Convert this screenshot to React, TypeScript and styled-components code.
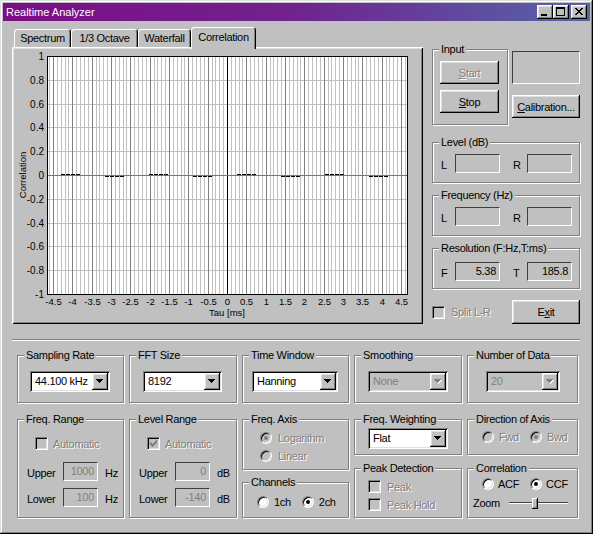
import styled, { createGlobalStyle } from "styled-components";

const GlobalStyle = createGlobalStyle`
  * { box-sizing: border-box; }
  html, body { margin: 0; padding: 0; background: #c0c0c0; }
  body {
    font-family: "Liberation Sans", Arial, sans-serif;
    font-size: 11px;
    color: #000;
  }
`;

const raised = `
  box-shadow: inset -1px -1px #000, inset 1px 1px #fff, inset -2px -2px #808080, inset 2px 2px #dfdfdf;
`;
const sunken = `
  box-shadow: inset 1px 1px #808080, inset -1px -1px #fff, inset 2px 2px #000, inset -2px -2px #dfdfdf;
`;

// ---------- window frame ----------

const Window = styled.div`
  width: 593px;
  height: 534px;
  padding: 3px;
  background: #c0c0c0;
  box-shadow: inset -1px -1px #000, inset 1px 1px #dfdfdf, inset -2px -2px #808080, inset 2px 2px #fff;
  letter-spacing: -0.3px;
`;

const TitleBar = styled.div`
  height: 18px;
  display: flex;
  align-items: center;
  padding: 0 3px;
  background: linear-gradient(90deg, #7d0c87 0%, #70238f 50%, #5566aa 100%);
  color: #fff;
  letter-spacing: 0;
`;

const TitleText = styled.span`
  flex: 1;
  font-size: 11px;
`;

const TitleButton = styled.span<{ $gap?: number }>`
  display: block;
  width: 16px;
  height: 14px;
  margin-left: ${(p) => p.$gap ?? 0}px;
  background: #c0c0c0;
  ${raised}
  svg { display: block; }
`;

const Main = styled.div`
  padding: 6px 10px 0 9px;
`;

const TopArea = styled.div`
  display: flex;
  align-items: flex-start;
  gap: 9px;
`;

// ---------- tabs ----------

const TabArea = styled.div`
  width: 411px;
`;

const TabStrip = styled.div`
  height: 20px;
  display: flex;
  align-items: flex-end;
  padding-left: 2px;
`;

const Tab = styled.div<{ $w: number; $active?: boolean }>`
  position: relative;
  z-index: ${(p) => (p.$active ? 1 : 0)};
  width: ${(p) => p.$w}px;
  height: ${(p) => (p.$active ? 22 : 18)}px;
  margin-bottom: ${(p) => (p.$active ? -2 : 0)}px;
  padding-bottom: ${(p) => (p.$active ? 3 : 0)}px;
  display: flex;
  align-items: center;
  justify-content: center;
  background: #c0c0c0;
  border-radius: 3px 3px 0 0;
  box-shadow: inset 1px 1px #fff, inset -1px 0 #000, inset -2px 0 #808080;
  white-space: nowrap;
`;

const Panel = styled.div`
  height: 277px;
  padding: 2px;
  background: #c0c0c0;
  box-shadow: inset 1px 1px #fff, inset -1px -1px #000, inset 2px 2px #dfdfdf, inset -2px -2px #808080;
  svg { display: block; }
`;

// ---------- right column ----------

const RightColumn = styled.div`
  width: 148px;
  padding-top: 22px;
  display: flex;
  flex-direction: column;
`;

const InputRow = styled.div`
  display: flex;
  gap: 4px;
`;

const SideStack = styled.div`
  width: 68px;
  padding-top: 2px;
  display: flex;
  flex-direction: column;
  gap: 11px;
`;

const BlankBox = styled.div`
  height: 33px;
  border: 1px solid;
  border-color: #404040 #fff #fff #404040;
`;

const Button = styled.button<{ $w: number; $h?: number; $mt?: number }>`
  width: ${(p) => p.$w}px;
  height: ${(p) => p.$h ?? 23}px;
  margin-top: ${(p) => p.$mt ?? 0}px;
  padding: 0;
  border: none;
  background: #c0c0c0;
  font: inherit;
  letter-spacing: inherit;
  color: #000;
  ${raised}
  &:disabled {
    color: #808080;
    text-shadow: 1px 1px 0 #fff;
  }
`;

const Group = styled.div<{ $w?: number; $h: number; $mt?: number }>`
  width: ${(p) => (p.$w ? `${p.$w}px` : "auto")};
  height: ${(p) => p.$h}px;
  margin-top: ${(p) => p.$mt ?? 0}px;
  border: 1px solid #808080;
  box-shadow: inset 1px 1px #fff, 1px 1px #fff;
`;

const GroupLabel = styled.div`
  width: max-content;
  height: 13px;
  line-height: 13px;
  margin: -7px 0 -6px 6px;
  padding: 0 2px;
  background: #c0c0c0;
  white-space: nowrap;
`;

const InputButtons = styled.div`
  padding: 11px 0 0 7px;
  display: flex;
  flex-direction: column;
  gap: 6px;
`;

const ValueRow = styled.div<{ $pt?: number }>`
  display: flex;
  align-items: center;
  padding: ${(p) => p.$pt ?? 11}px 0 0 8px;
`;

const RowLabel = styled.span<{ $ml?: number }>`
  width: 14px;
  margin-left: ${(p) => p.$ml ?? 0}px;
  padding-top: 2px;
`;

const ValueBox = styled.div`
  width: 45px;
  height: 19px;
  border: 1px solid;
  border-color: #404040 #fff #fff #404040;
  padding-right: 3px;
  line-height: 17px;
  text-align: right;
`;

const FooterRow = styled.div`
  margin-top: 11px;
  height: 24px;
  display: flex;
  align-items: center;
  justify-content: space-between;
`;

// ---------- common controls ----------

const Disabled = styled.span`
  color: #808080;
  text-shadow: 1px 1px 0 #fff;
`;

const Option = styled.span<{ $gap?: number }>`
  display: inline-flex;
  align-items: center;
  gap: ${(p) => p.$gap ?? 5}px;
  white-space: nowrap;
`;

const CheckBox = styled.span<{ $disabled?: boolean }>`
  flex: none;
  width: 13px;
  height: 13px;
  display: flex;
  align-items: center;
  justify-content: center;
  background: ${(p) => (p.$disabled ? "#c0c0c0" : "#fff")};
  border: 1px solid;
  border-color: #808080 #fff #fff #808080;
  box-shadow: inset 1px 1px #000, inset -1px -1px #dfdfdf;
  svg { display: block; }
`;

const Radio = styled.span<{ $checked?: boolean; $disabled?: boolean }>`
  flex: none;
  width: 12px;
  height: 12px;
  border-radius: 50%;
  background: ${(p) => (p.$disabled ? "#c0c0c0" : "#fff")};
  border: 1px solid;
  border-color: #808080 #fff #fff #808080;
  box-shadow: inset 1px 1px #000, inset -1px -1px #dfdfdf;
  &::after {
    content: "";
    display: ${(p) => (p.$checked ? "block" : "none")};
    width: 4px;
    height: 4px;
    margin: 3px;
    border-radius: 50%;
    background: ${(p) => (p.$disabled ? "#808080" : "#000")};
  }
`;

const ComboBox = styled.div<{ $w: number; $ml: number; $mt: number; $disabled?: boolean }>`
  width: ${(p) => p.$w}px;
  height: 21px;
  margin: ${(p) => p.$mt}px 0 0 ${(p) => p.$ml}px;
  padding: 2px;
  display: flex;
  background: ${(p) => (p.$disabled ? "#c0c0c0" : "#fff")};
  ${sunken}
`;

const ComboValue = styled.span<{ $disabled?: boolean }>`
  flex: 1;
  padding-left: 3px;
  line-height: 17px;
  color: ${(p) => (p.$disabled ? "#808080" : "#000")};
`;

const ComboButton = styled.span`
  width: 16px;
  display: flex;
  align-items: center;
  justify-content: center;
  background: #c0c0c0;
  ${raised}
  svg { display: block; }
`;

const EditBox = styled.div`
  width: 35px;
  height: 19px;
  border: 1px solid;
  border-color: #404040 #fff #fff #404040;
  padding-right: 3px;
  line-height: 17px;
  text-align: right;
  color: #808080;
`;

// ---------- bottom settings ----------

const Separator = styled.div`
  margin-top: 15px;
  height: 2px;
  border-top: 1px solid #808080;
  border-bottom: 1px solid #fff;
`;

const Settings = styled.div`
  margin-top: 14px;
  padding-left: 5px;
  display: grid;
  grid-template-columns: 107px 108px 107px 108px 111px;
  grid-template-rows: 48px 99px;
  column-gap: 5px;
  row-gap: 16px;
`;

const Stack = styled.div`
  display: flex;
  flex-direction: column;
  justify-content: space-between;
`;

const Row = styled.div<{ $mt: number; $ml: number; $gap?: number; $h?: number }>`
  display: flex;
  align-items: center;
  height: ${(p) => p.$h ?? 13}px;
  margin: ${(p) => p.$mt}px 0 0 ${(p) => p.$ml}px;
  gap: ${(p) => p.$gap ?? 0}px;
`;

const FieldRow = styled.div<{ $mt: number }>`
  display: flex;
  align-items: center;
  margin-top: ${(p) => p.$mt}px;
  padding-left: 9px;
`;

const FieldLabel = styled.span`
  width: 36px;
  padding-top: 2px;
`;

const Unit = styled.span`
  margin-left: 7px;
  padding-top: 2px;
`;

const Slider = styled.div`
  position: relative;
  width: 59px;
  height: 14px;
  margin-left: 9px;
  display: flex;
  align-items: center;
`;

const SliderTrack = styled.div`
  width: 100%;
  height: 2px;
  border-top: 1px solid #404040;
  border-bottom: 1px solid #fff;
`;

const SliderThumb = styled.div<{ $left: number }>`
  position: absolute;
  left: ${(p) => p.$left}px;
  top: 2px;
  width: 6px;
  height: 11px;
  background: #c0c0c0;
  box-shadow: inset -1px -1px #000, inset 1px 1px #fff, inset -2px -2px #808080;
`;

// ---------- drawings ----------

const Arrow = ({ disabled }: { disabled?: boolean }) => {
  const d = "M0 0H7V1H6V2H5V3H4V4H3V3H2V2H1V1H0Z";
  return (
    <svg width="8" height="5" viewBox="0 0 8 5" shapeRendering="crispEdges">
      {disabled && <path d={d} fill="#fff" transform="translate(1 1)" />}
      <path d={d} fill={disabled ? "#808080" : "#000"} />
    </svg>
  );
};

const CheckMark = ({ color }: { color: string }) => (
  <svg width="7" height="7" viewBox="0 0 7 7" shapeRendering="crispEdges">
    <path d="M0 2H1V3H2V4H3V3H4V2H5V1H6V0H7V3H6V4H5V5H4V6H3V7H2V6H1V5H0Z" fill={color} />
  </svg>
);

const Check = ({ checked, disabled }: { checked?: boolean; disabled?: boolean }) => (
  <CheckBox $disabled={disabled}>
    {checked && <CheckMark color={disabled ? "#808080" : "#000"} />}
  </CheckBox>
);

const MinimizeGlyph = () => (
  <svg width="16" height="14" shapeRendering="crispEdges">
    <rect x="4" y="9" width="6" height="2" fill="#000" />
  </svg>
);

const MaximizeGlyph = () => (
  <svg width="16" height="14" shapeRendering="crispEdges">
    <rect x="3" y="2" width="9" height="2" fill="#000" />
    <rect x="3" y="2" width="1" height="9" fill="#000" />
    <rect x="11" y="2" width="1" height="9" fill="#000" />
    <rect x="3" y="10" width="9" height="1" fill="#000" />
  </svg>
);

const CloseGlyph = () => {
  const cells: [number, number][] = [];
  for (let r = 0; r < 7; r++) {
    const a = Math.min(r, 6 - r);
    [a, a + 1, 6 - a, 7 - a].forEach((c) => cells.push([c, r]));
  }
  return (
    <svg width="16" height="14" shapeRendering="crispEdges">
      {cells.map(([c, r], i) => (
        <rect key={i} x={4 + c} y={3 + r} width="1" height="1" fill="#000" />
      ))}
    </svg>
  );
};

// ---------- correlation chart ----------

const PLOT = { left: 47, right: 407, top: 56, bottom: 294 };
const xOf = (t: number) => Math.floor(227.5 + t * 38.67) + 0.5;
const yOf = (v: number) => Math.floor(175.5 - v * 119) + 0.5;

const CorrelationChart = () => {
  const minor: number[] = [];
  const major: number[] = [];
  for (let i = -46; i <= 46; i++) {
    if (i === 0) continue;
    (i % 5 === 0 ? major : minor).push(xOf(i / 10));
  }
  const yTicks = [1, 0.8, 0.6, 0.4, 0.2, 0, -0.2, -0.4, -0.6, -0.8, -1];
  const xTicks: number[] = [];
  for (let i = -9; i <= 9; i++) xTicks.push(i / 2);
  const dashes = Array.from({ length: 8 }, (_, k) => ({
    x: 61 + k * 44,
    y: k % 2 === 0 ? 174 : 176,
  }));
  const text = { fontFamily: "Liberation Sans, Arial, sans-serif", letterSpacing: 0 };

  return (
    <svg width="407" height="273" viewBox="14 49 407 273">
      <rect
        x={PLOT.left}
        y={PLOT.top}
        width={PLOT.right - PLOT.left + 1}
        height={PLOT.bottom - PLOT.top + 1}
        fill="#fff"
      />
      <g shapeRendering="crispEdges">
        {minor.map((x) => (
          <line key={`n${x}`} x1={x} x2={x} y1={PLOT.top} y2={PLOT.bottom} stroke="#c0c0c0" />
        ))}
        {yTicks
          .filter((v) => Math.abs(v) < 1 && v !== 0)
          .map((v) => (
            <line key={`h${v}`} x1={PLOT.left} x2={PLOT.right} y1={yOf(v)} y2={yOf(v)} stroke="#c0c0c0" />
          ))}
        {major.map((x) => (
          <line key={`m${x}`} x1={x} x2={x} y1={PLOT.top} y2={PLOT.bottom} stroke="#808080" />
        ))}
        <line x1={xOf(0)} x2={xOf(0)} y1={PLOT.top} y2={PLOT.bottom} stroke="#000" />
        <rect x={PLOT.left} y={175} width={PLOT.right - PLOT.left} height={1} fill="#00c800" />
        {dashes.map((d) => (
          <g key={d.x}>
            {[0, 5, 10, 15].map((o) => (
              <rect key={o} x={d.x + o} y={d.y} width={4} height={1} fill="#000" />
            ))}
          </g>
        ))}
        <rect
          x={PLOT.left + 0.5}
          y={PLOT.top + 0.5}
          width={PLOT.right - PLOT.left}
          height={PLOT.bottom - PLOT.top}
          fill="none"
          stroke="#000"
        />
      </g>
      <g style={text} fontSize="10" fill="#000">
        {yTicks.map((v) => (
          <text key={`yl${v}`} x={44} y={yOf(v) + 1} textAnchor="end" dominantBaseline="middle">
            {String(v)}
          </text>
        ))}
      </g>
      <g style={text} fontSize="9.5" fill="#000">
        {xTicks.map((t) => (
          <text key={`xl${t}`} x={xOf(t)} y={302} textAnchor="middle" dominantBaseline="middle">
            {String(t)}
          </text>
        ))}
        <text x={227} y={313.5} textAnchor="middle" dominantBaseline="middle">
          Tau [ms]
        </text>
        <text
          x={0}
          y={0}
          textAnchor="middle"
          dominantBaseline="middle"
          transform="translate(23.5 175) rotate(-90)"
        >
          Correlation
        </text>
      </g>
    </svg>
  );
};

// ---------- page ----------

const TABS = [
  { label: "Spectrum", w: 57 },
  { label: "1/3 Octave", w: 67 },
  { label: "Waterfall", w: 53 },
  { label: "Correlation", w: 65, active: true },
];

export default function App() {
  return (
    <>
      <GlobalStyle />
      <Window>
        <TitleBar>
          <TitleText>Realtime Analyzer</TitleText>
          <TitleButton>
            <MinimizeGlyph />
          </TitleButton>
          <TitleButton>
            <MaximizeGlyph />
          </TitleButton>
          <TitleButton $gap={2}>
            <CloseGlyph />
          </TitleButton>
        </TitleBar>

        <Main>
          <TopArea>
            <TabArea>
              <TabStrip>
                {TABS.map((t) => (
                  <Tab key={t.label} $w={t.w} $active={t.active}>
                    {t.label}
                  </Tab>
                ))}
              </TabStrip>
              <Panel>
                <CorrelationChart />
              </Panel>
            </TabArea>

            <RightColumn>
              <InputRow>
                <Group $w={76} $h={76}>
                  <GroupLabel>Input</GroupLabel>
                  <InputButtons>
                    <Button $w={59} disabled>
                      <u>S</u>tart
                    </Button>
                    <Button $w={59}>
                      <u>S</u>top
                    </Button>
                  </InputButtons>
                </Group>
                <SideStack>
                  <BlankBox />
                  <Button $w={68}>
                    <u>C</u>alibration...
                  </Button>
                </SideStack>
              </InputRow>

              <Group $h={41} $mt={17}>
                <GroupLabel>Level (dB)</GroupLabel>
                <ValueRow>
                  <RowLabel>L</RowLabel>
                  <ValueBox />
                  <RowLabel $ml={13}>R</RowLabel>
                  <ValueBox />
                </ValueRow>
              </Group>

              <Group $h={41} $mt={12}>
                <GroupLabel>Frequency (Hz)</GroupLabel>
                <ValueRow>
                  <RowLabel>L</RowLabel>
                  <ValueBox />
                  <RowLabel $ml={13}>R</RowLabel>
                  <ValueBox />
                </ValueRow>
              </Group>

              <Group $h={41} $mt={12}>
                <GroupLabel>Resolution (F:Hz,T:ms)</GroupLabel>
                <ValueRow $pt={13}>
                  <RowLabel>F</RowLabel>
                  <ValueBox>5.38</ValueBox>
                  <RowLabel $ml={13}>T</RowLabel>
                  <ValueBox>185.8</ValueBox>
                </ValueRow>
              </Group>

              <FooterRow>
                <Option $gap={6}>
                  <Check disabled />
                  <Disabled>Split L-R</Disabled>
                </Option>
                <Button $w={68} $h={24}>
                  E<u>x</u>it
                </Button>
              </FooterRow>
            </RightColumn>
          </TopArea>

          <Separator />

          <Settings>
            <Group $h={48}>
              <GroupLabel>Sampling Rate</GroupLabel>
              <ComboBox $w={80} $ml={12} $mt={15}>
                <ComboValue>44.100 kHz</ComboValue>
                <ComboButton>
                  <Arrow />
                </ComboButton>
              </ComboBox>
            </Group>
            <Group $h={48}>
              <GroupLabel>FFT Size</GroupLabel>
              <ComboBox $w={79} $ml={13} $mt={15}>
                <ComboValue>8192</ComboValue>
                <ComboButton>
                  <Arrow />
                </ComboButton>
              </ComboBox>
            </Group>
            <Group $h={48}>
              <GroupLabel>Time Window</GroupLabel>
              <ComboBox $w={86} $ml={9} $mt={15}>
                <ComboValue>Hanning</ComboValue>
                <ComboButton>
                  <Arrow />
                </ComboButton>
              </ComboBox>
            </Group>
            <Group $h={48}>
              <GroupLabel>Smoothing</GroupLabel>
              <ComboBox $w={80} $ml={13} $mt={15} $disabled>
                <ComboValue $disabled>None</ComboValue>
                <ComboButton>
                  <Arrow disabled />
                </ComboButton>
              </ComboBox>
            </Group>
            <Group $h={48}>
              <GroupLabel>Number of Data</GroupLabel>
              <ComboBox $w={74} $ml={18} $mt={15} $disabled>
                <ComboValue $disabled>20</ComboValue>
                <ComboButton>
                  <Arrow disabled />
                </ComboButton>
              </ComboBox>
            </Group>

            <Group $h={99}>
              <GroupLabel>Freq. Range</GroupLabel>
              <Row $mt={17} $ml={17}>
                <Option>
                  <Check disabled />
                  <Disabled>Automatic</Disabled>
                </Option>
              </Row>
              <FieldRow $mt={12}>
                <FieldLabel>Upper</FieldLabel>
                <EditBox>1000</EditBox>
                <Unit>Hz</Unit>
              </FieldRow>
              <FieldRow $mt={7}>
                <FieldLabel>Lower</FieldLabel>
                <EditBox>100</EditBox>
                <Unit>Hz</Unit>
              </FieldRow>
            </Group>

            <Group $h={99}>
              <GroupLabel>Level Range</GroupLabel>
              <Row $mt={17} $ml={17}>
                <Option>
                  <Check checked disabled />
                  <Disabled>Automatic</Disabled>
                </Option>
              </Row>
              <FieldRow $mt={12}>
                <FieldLabel>Upper</FieldLabel>
                <EditBox>0</EditBox>
                <Unit>dB</Unit>
              </FieldRow>
              <FieldRow $mt={7}>
                <FieldLabel>Lower</FieldLabel>
                <EditBox>-140</EditBox>
                <Unit>dB</Unit>
              </FieldRow>
            </Group>

            <Stack>
              <Group $h={51}>
                <GroupLabel>Freq. Axis</GroupLabel>
                <Row $mt={12} $ml={17} $h={12}>
                  <Option $gap={6}>
                    <Radio $checked $disabled />
                    <Disabled>Logarithm</Disabled>
                  </Option>
                </Row>
                <Row $mt={6} $ml={17} $h={12}>
                  <Option $gap={6}>
                    <Radio $disabled />
                    <Disabled>Linear</Disabled>
                  </Option>
                </Row>
              </Group>
              <Group $h={36}>
                <GroupLabel>Channels</GroupLabel>
                <Row $mt={13} $ml={14} $h={12} $gap={11}>
                  <Option>
                    <Radio />
                    <span>1ch</span>
                  </Option>
                  <Option>
                    <Radio $checked />
                    <span>2ch</span>
                  </Option>
                </Row>
              </Group>
            </Stack>

            <Stack>
              <Group $h={36}>
                <GroupLabel>Freq. Weighting</GroupLabel>
                <ComboBox $w={80} $ml={13} $mt={8}>
                  <ComboValue>Flat</ComboValue>
                  <ComboButton>
                    <Arrow />
                  </ComboButton>
                </ComboBox>
              </Group>
              <Group $h={50}>
                <GroupLabel>Peak Detection</GroupLabel>
                <Row $mt={11} $ml={13}>
                  <Option $gap={6}>
                    <Check disabled />
                    <Disabled>Peak</Disabled>
                  </Option>
                </Row>
                <Row $mt={5} $ml={13}>
                  <Option $gap={6}>
                    <Check disabled />
                    <Disabled>Peak Hold</Disabled>
                  </Option>
                </Row>
              </Group>
            </Stack>

            <Stack>
              <Group $h={36}>
                <GroupLabel>Direction of Axis</GroupLabel>
                <Row $mt={11} $ml={14} $h={12} $gap={11}>
                  <Option>
                    <Radio $disabled />
                    <Disabled>Fwd</Disabled>
                  </Option>
                  <Option>
                    <Radio $checked $disabled />
                    <Disabled>Bwd</Disabled>
                  </Option>
                </Row>
              </Group>
              <Group $h={50}>
                <GroupLabel>Correlation</GroupLabel>
                <Row $mt={9} $ml={14} $h={12} $gap={11}>
                  <Option $gap={4}>
                    <Radio />
                    <span>ACF</span>
                  </Option>
                  <Option $gap={4}>
                    <Radio $checked />
                    <span>CCF</span>
                  </Option>
                </Row>
                <Row $mt={6} $ml={5} $h={14}>
                  <span>Zoom</span>
                  <Slider>
                    <SliderTrack />
                    <SliderThumb $left={23} />
                  </Slider>
                </Row>
              </Group>
            </Stack>
          </Settings>
        </Main>
      </Window>
    </>
  );
}
